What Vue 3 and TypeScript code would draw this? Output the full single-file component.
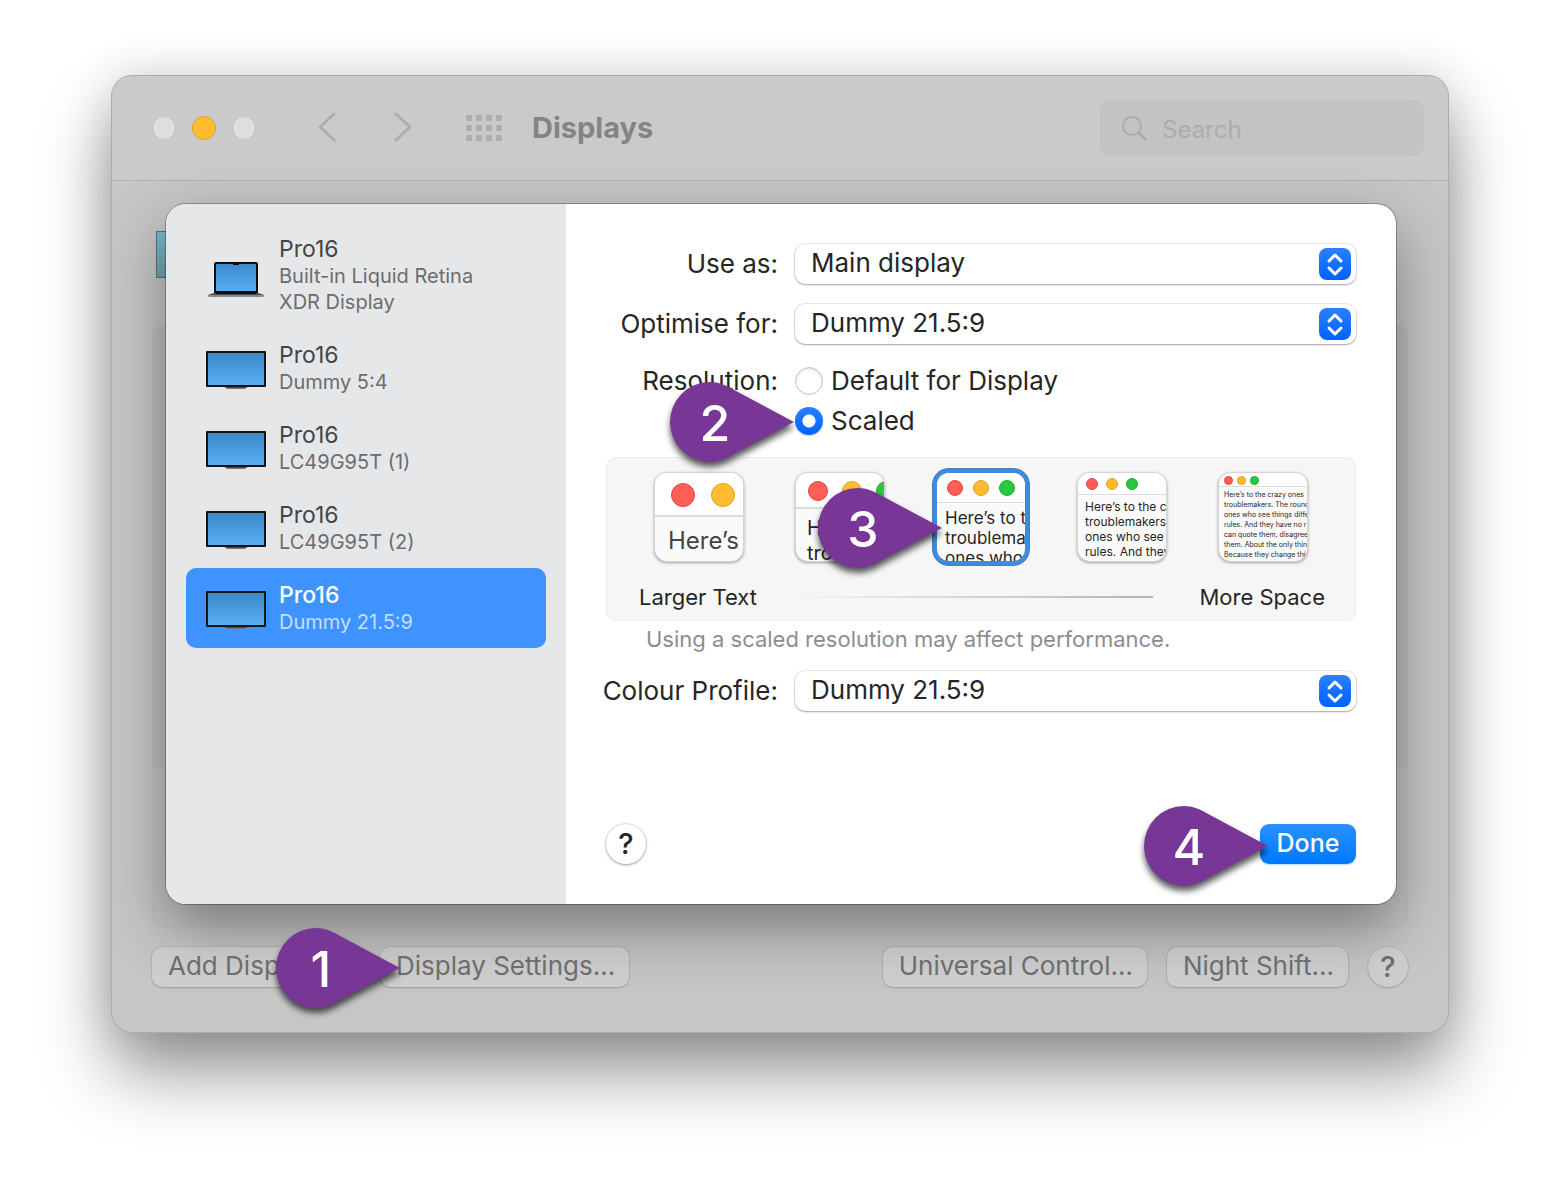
<script setup lang="ts">
import { ref } from 'vue'

interface Display {
  id: number
  name: string
  detail: string
  kind: 'laptop' | 'monitor'
}

interface Scale {
  id: string
  label: string
  lines: string[]
}

const displays: Display[] = [
  { id: 1, name: 'Pro16', detail: 'Built-in Liquid Retina XDR Display', kind: 'laptop' },
  { id: 2, name: 'Pro16', detail: 'Dummy 5:4', kind: 'monitor' },
  { id: 3, name: 'Pro16', detail: 'LC49G95T (1)', kind: 'monitor' },
  { id: 4, name: 'Pro16', detail: 'LC49G95T (2)', kind: 'monitor' },
  { id: 5, name: 'Pro16', detail: 'Dummy 21.5:9', kind: 'monitor' },
]

const scales: Scale[] = [
  { id: 'xl', label: 'Largest text', lines: ['Here’s'] },
  { id: 'lg', label: 'Larger text', lines: ['Here’s', 'troublem'] },
  { id: 'md', label: 'Medium', lines: ['Here’s to the', 'troublemakers', 'ones who see'] },
  { id: 'sm', label: 'More space', lines: ['Here’s to the crazy', 'troublemakers. The', 'ones who see things', 'rules. And they have'] },
  {
    id: 'xs',
    label: 'Most space',
    lines: [
      'Here’s to the crazy ones',
      'troublemakers. The round',
      'ones who see things differ',
      'rules. And they have no r',
      'can quote them, disagree',
      'them. About the only thing',
      'Because they change things',
    ],
  },
]

const selectedDisplay = ref(5)
const selectedScale = ref('md')
const resolution = ref('scaled')
const useAs = ref('Main display')
const optimiseFor = ref('Dummy 21.5:9')
const profile = ref('Dummy 21.5:9')

const calloutPath = 'M124 40 L66 9 C56 3 48 0 40 0 A40 40 0 0 0 40 80 C48 80 56 77 66 71 Z'
</script>

<template>
  <div class="page">
    <div class="window">
      <header class="toolbar">
        <div class="lights">
          <span class="light"></span>
          <span class="light amber"></span>
          <span class="light"></span>
        </div>
        <button class="tool back" aria-label="Back">
          <svg width="20" height="32" viewBox="0 0 20 32"><path d="M17 2 L3 15 L17 28" /></svg>
        </button>
        <button class="tool forward" aria-label="Forward">
          <svg width="20" height="32" viewBox="0 0 20 32"><path d="M3 2 L17 15 L3 28" /></svg>
        </button>
        <button class="tool all" aria-label="Show all">
          <svg width="36" height="26" viewBox="0 0 36 26">
            <template v-for="r in 3" :key="r">
              <rect v-for="c in 4" :key="c" :x="(c - 1) * 10" :y="(r - 1) * 10" width="6" height="6" rx="1" />
            </template>
          </svg>
        </button>
        <h1>Displays</h1>
        <label class="search">
          <svg width="26" height="26" viewBox="0 0 26 26"><circle cx="10" cy="11" r="9" /><path d="M17 18 L23 24" /></svg>
          <input type="search" placeholder="Search" aria-label="Search" />
        </label>
      </header>

      <div class="pane">
        <div class="arrangement"></div>
        <div class="group"><div class="group-inner"></div></div>
        <div class="actions">
          <button class="btn add">Add Display</button>
          <span class="anchor at-settings">
            <button class="btn">Display Settings…</button>
            <span class="callout"><svg viewBox="0 0 124 80"><path :d="calloutPath" /></svg><b>1</b></span>
          </span>
          <span class="spacer"></span>
          <button class="btn">Universal Control…</button>
          <button class="btn">Night Shift…</button>
          <button class="btn help" aria-label="Help">?</button>
        </div>
      </div>

      <section class="sheet" role="dialog" aria-label="Display settings">
        <ul class="sidebar">
          <li v-for="d in displays" :key="d.id">
            <button class="display" :class="{ selected: d.id === selectedDisplay }" @click="selectedDisplay = d.id">
              <svg v-if="d.kind === 'laptop'" width="60" height="46" viewBox="0 0 60 46">
                <defs>
                  <linearGradient id="lap" x1="0" y1="0" x2="0" y2="1">
                    <stop offset="0" stop-color="#3b8acb" /><stop offset="1" stop-color="#5aaeef" />
                  </linearGradient>
                </defs>
                <rect x="8" y="9" width="44" height="32" rx="2" fill="#0c0d0e" />
                <rect x="10" y="11" width="40" height="27" fill="url(#lap)" />
                <rect x="27" y="10" width="6" height="2" fill="#0c0d0e" />
                <path d="M8 40 L2 42 H58 L52 40 Z" fill="#4a4a4d" />
                <path d="M10 39 H50 V41 H10 Z" fill="#0c0d0e" />
                <path d="M2 42 H58 V43 Q58 44 56 44 H4 Q2 44 2 43 Z" fill="#8b8a8f" />
              </svg>
              <svg v-else width="60" height="40" viewBox="0 0 60 40">
                <defs>
                  <linearGradient id="mon" x1="0" y1="0" x2="0" y2="1">
                    <stop offset="0" stop-color="#3b8acb" /><stop offset="1" stop-color="#5aaeef" />
                  </linearGradient>
                </defs>
                <path d="M19 38 H41 Q40 40 36 40 H24 Q20 40 19 38 Z" fill="#77726f" />
                <path d="M19 38 H41" stroke="#2a2a2c" />
                <rect x="0" y="2" width="60" height="36" rx="1" fill="#121416" />
                <rect x="2" y="4" width="56" height="32" fill="url(#mon)" />
              </svg>
              <span class="names">
                <span class="name">{{ d.name }}</span>
                <span class="detail">{{ d.detail }}</span>
              </span>
            </button>
          </li>
        </ul>

        <form class="settings" @submit.prevent>
          <div class="row">
            <label for="use-as">Use as:</label>
            <span class="popup">
              <select id="use-as" v-model="useAs"><option>Main display</option></select>
              <svg viewBox="0 0 32 32"><path d="M10 13 L16 7 L22 13 M10 20 L16 26 L22 20" /></svg>
            </span>
          </div>
          <div class="row">
            <label for="optimise">Optimise for:</label>
            <span class="popup">
              <select id="optimise" v-model="optimiseFor"><option>Dummy 21.5:9</option></select>
              <svg viewBox="0 0 32 32"><path d="M10 13 L16 7 L22 13 M10 20 L16 26 L22 20" /></svg>
            </span>
          </div>
          <div class="row radios" role="radiogroup" aria-labelledby="res-label">
            <span id="res-label" class="row-label">Resolution:</span>
            <div class="choices">
              <label class="choice">
                <input v-model="resolution" type="radio" name="resolution" value="default" />
                Default for Display
              </label>
              <label class="choice anchor at-scaled">
                <input v-model="resolution" type="radio" name="resolution" value="scaled" />
                Scaled
                <span class="callout"><svg viewBox="0 0 124 80"><path :d="calloutPath" /></svg><b>2</b></span>
              </label>
            </div>
          </div>

          <div class="scale-box">
            <div class="thumbs">
              <span v-for="s in scales" :key="s.id" class="anchor at-thumb">
                <button
                  type="button"
                  class="thumb"
                  :class="[s.id, { chosen: s.id === selectedScale }]"
                  :aria-label="s.label"
                  @click="selectedScale = s.id"
                >
                  <span class="bar"><i class="red"></i><i class="yellow"></i><i v-if="s.id !== 'xl'" class="green"></i></span>
                  <span class="copy"><span v-for="line in s.lines" :key="line">{{ line }}</span></span>
                </button>
                <span v-if="s.id === 'md'" class="callout"><svg viewBox="0 0 124 80"><path :d="calloutPath" /></svg><b>3</b></span>
              </span>
            </div>
            <div class="legend">
              <span>Larger Text</span>
              <span class="ramp"></span>
              <span>More Space</span>
            </div>
          </div>
          <p class="note">Using a scaled resolution may affect performance.</p>

          <div class="row">
            <label for="profile">Colour Profile:</label>
            <span class="popup">
              <select id="profile" v-model="profile"><option>Dummy 21.5:9</option></select>
              <svg viewBox="0 0 32 32"><path d="M10 13 L16 7 L22 13 M10 20 L16 26 L22 20" /></svg>
            </span>
          </div>

          <div class="footer">
            <button type="button" class="btn help light-help" aria-label="Help">?</button>
            <span class="anchor at-done">
              <button type="submit" class="done">Done</button>
              <span class="callout"><svg viewBox="0 0 124 80"><path :d="calloutPath" /></svg><b>4</b></span>
            </span>
          </div>
        </form>
      </section>
    </div>
  </div>
</template>

<style>
body {
  background: #fff;
}
</style>

<style scoped>
.page,
.page * {
  box-sizing: border-box;
}

.page {
  padding: 76px 112px 148px;
  overflow: hidden;
  font-family: Inter, 'Liberation Sans', sans-serif;
  font-size: 26px;
  line-height: 30px;
  color: #262626;
}

button,
input,
select {
  font: inherit;
  color: inherit;
}

button {
  border: 0;
  padding: 0;
  background: none;
}

.window {
  position: relative;
  border-radius: 20px;
  background: #c6c6c6;
  box-shadow:
    0 0 0 1px #acacac,
    0 40px 70px rgba(0, 0, 0, 0.42),
    0 0 50px rgba(0, 0, 0, 0.14);
}

/* Toolbar */
.toolbar {
  display: flex;
  align-items: center;
  height: 105px;
  padding: 0 24px 0 40px;
  border-bottom: 1px solid #b3b3b3;
  border-radius: 20px 20px 0 0;
  background: #cacaca;
}

.lights {
  display: flex;
  gap: 16px;
}

.light {
  width: 24px;
  height: 24px;
  border: 1px solid #c2c2c2;
  border-radius: 50%;
  background: #dedede;
}

.light.amber {
  border-color: #e0a02a;
  background: #fdbc2e;
}

.tool {
  display: flex;
}

.tool path {
  fill: none;
  stroke: #adadad;
  stroke-width: 3;
  stroke-linecap: round;
  stroke-linejoin: round;
}

.tool rect {
  fill: #adadad;
}

.back {
  margin-left: 61px;
}

.forward {
  margin-left: 56px;
}

.all {
  margin-left: 53px;
}

h1 {
  margin: 0 auto 0 30px;
  font-size: 29px;
  line-height: 36px;
  font-weight: 700;
  color: #848484;
}

.search {
  display: flex;
  align-items: center;
  gap: 14px;
  width: 324px;
  height: 56px;
  padding: 0 16px 0 22px;
  border-radius: 11px;
  background: #c3c3c3;
  font-size: 24px;
}

.search svg {
  flex: none;
  fill: none;
  stroke: #acacac;
  stroke-width: 2;
  stroke-linecap: round;
}

.search svg path {
  stroke-width: 3;
}

.search input {
  min-width: 0;
  width: 100%;
  padding: 3px 0 0;
  border: 0;
  outline: 0;
  background: none;
}

.search input::placeholder {
  color: #acacac;
  opacity: 1;
}

/* Window content under the sheet */
.pane {
  padding: 50px 40px 45px;
}

.arrangement {
  width: 80px;
  height: 47px;
  margin: 0 0 47px 4px;
  border: 1px solid #5f6f74;
  background: linear-gradient(#78bccd, #6ea5b3);
}

.group {
  min-height: 602px;
  border: 1px solid #bebebe;
  border-radius: 10px;
  background: #c3c3c3;
}

.group-inner {
  height: 441px;
  border-radius: 10px 10px 0 0;
  background: #bebebe;
}

.actions {
  position: relative;
  z-index: 2;
  display: flex;
  gap: 20px;
  margin-top: 20px;
}

.spacer {
  flex: 1;
}

.btn {
  height: 40px;
  padding: 0 14px 2px 16px;
  border-radius: 10px;
  background: rgba(255, 255, 255, 0.16);
  box-shadow:
    0 0 0 1px rgba(0, 0, 0, 0.06),
    0 1px 2px rgba(0, 0, 0, 0.16);
  color: #6d6d6d;
  white-space: nowrap;
}

.btn.add {
  min-width: 208px;
  text-align: left;
}

.btn.help {
  width: 40px;
  padding: 0;
  border-radius: 50%;
  font-size: 29px;
  font-weight: 500;
}

/* Sheet */
.sheet {
  position: absolute;
  inset: 128px 52px 128px 54px;
  display: flex;
  border-radius: 20px;
  background: #fff;
  box-shadow:
    0 0 0 1px rgba(0, 0, 0, 0.28),
    0 24px 60px rgba(0, 0, 0, 0.38);
}

.sidebar {
  flex: none;
  width: 400px;
  margin: 0;
  padding: 18px 20px;
  border-radius: 20px 0 0 20px;
  background: #e6e7e9;
  list-style: none;
}

.display {
  display: flex;
  align-items: center;
  gap: 13px;
  width: 100%;
  padding: 14px 40px 13px 20px;
  border-radius: 10px;
  text-align: left;
}

.display svg {
  flex: none;
}

.names {
  display: flex;
  flex-direction: column;
  gap: 1px;
  line-height: 26px;
}

.name {
  font-size: 23px;
  color: #454545;
}

.detail {
  font-size: 20px;
  color: #6c6d6e;
}

.selected {
  background: #3e93fe;
}

.selected .name {
  font-weight: 500;
  color: #fff;
}

.selected .detail {
  color: #c4deff;
}

/* Settings form */
.settings {
  flex: 1;
  display: flex;
  flex-direction: column;
  min-width: 0;
  padding: 40px;
}

.row {
  display: flex;
  align-items: center;
  gap: 17px;
  margin-bottom: 20px;
}

.row > label,
.row-label {
  flex: none;
  display: flex;
  justify-content: flex-end;
  width: 172px;
  white-space: nowrap;
}

.popup {
  position: relative;
  flex: 1;
  height: 40px;
}

.popup select {
  appearance: none;
  display: block;
  width: 100%;
  height: 100%;
  padding: 0 48px 3px 16px;
  border: 0;
  border-radius: 10px;
  background: #fff;
  box-shadow:
    0 0 0 1px rgba(0, 0, 0, 0.08),
    0 1px 2px rgba(0, 0, 0, 0.3);
}

.popup svg {
  position: absolute;
  top: 4px;
  right: 5px;
  width: 32px;
  height: 32px;
  border-radius: 8px;
  background: linear-gradient(#2a80ff, #0062ff);
  fill: none;
  stroke: #fff;
  stroke-width: 3;
  stroke-linecap: round;
  stroke-linejoin: round;
  pointer-events: none;
}

.radios {
  align-items: flex-start;
  margin: 2px 0 21px;
}

.choices {
  display: flex;
  flex-direction: column;
  align-items: flex-start;
  gap: 10px;
}

.choice {
  display: flex;
  align-items: center;
  gap: 8px;
}

.choice input {
  appearance: none;
  width: 28px;
  height: 28px;
  margin: 0;
  border: 1px solid #c4c4c4;
  border-radius: 50%;
  background: #fff;
  box-shadow: inset 0 1px 3px rgba(0, 0, 0, 0.15);
}

.choice input:checked {
  border: 0;
  background: radial-gradient(circle, #fff 6px, transparent 7px), linear-gradient(#2a80ff, #0062ff);
  box-shadow: 0 1px 2px rgba(0, 98, 255, 0.3);
}

.scale-box {
  padding: 14px 0 8px;
  border: 1px solid #ebebeb;
  border-radius: 10px;
  background: #f6f6f6;
}

.thumbs {
  display: flex;
  justify-content: space-between;
  padding: 0 47px;
}

.thumb {
  display: flex;
  flex-direction: column;
  align-items: stretch;
  justify-content: flex-start;
  width: 90px;
  height: 90px;
  border: 1px solid #d4d4d4;
  border-radius: 13px;
  overflow: hidden;
  background: #fafafa;
  box-shadow: 0 1px 3px rgba(0, 0, 0, 0.35);
  text-align: left;
}

.thumb.chosen {
  border-color: #3f8ade;
  box-shadow:
    0 0 0 3px #3f8ade,
    0 0 0 4px #4a7fbd;
}

.bar {
  flex: none;
  display: flex;
  align-items: center;
  height: var(--bar);
  padding: 1px 0 0 var(--bar-pad);
  gap: var(--gap);
  border-bottom: 1px solid #dcdcdc;
  background: #fff;
}

.bar i {
  flex: none;
  width: var(--dot);
  height: var(--dot);
  border-width: 1px;
  border-style: solid;
  border-radius: 50%;
}

.red {
  border-color: #e2463f;
  background: #ff5f57;
}

.yellow {
  border-color: #e0a01f;
  background: #febc2e;
}

.green {
  border-color: #1dad2b;
  background: #28c840;
}

.copy {
  display: flex;
  flex-direction: column;
  padding: var(--copy-top) 0 0 var(--copy-left);
  white-space: nowrap;
}

.xl {
  --bar: 44px;
  --bar-pad: 16px;
  --gap: 16px;
  --dot: 24px;
  --copy-top: 9px;
  --copy-left: 13px;
  font-size: 24px;
  line-height: 30px;
  color: #444;
}

.xl .bar,
.lg .bar {
  border-bottom-width: 2px;
}

.lg {
  --bar: 36px;
  --bar-pad: 12px;
  --gap: 14px;
  --dot: 20px;
  --copy-top: 7px;
  --copy-left: 11px;
  font-size: 20px;
  line-height: 25px;
}

.md {
  --bar: 30px;
  --bar-pad: 10px;
  --gap: 10px;
  --dot: 16px;
  --copy-top: 5px;
  --copy-left: 8px;
  font-size: 17px;
  line-height: 20px;
}

.sm {
  --bar: 22px;
  --bar-pad: 8px;
  --gap: 8px;
  --dot: 12px;
  --copy-top: 4px;
  --copy-left: 7px;
  font-size: 12px;
  line-height: 15px;
}

.xs {
  --bar: 14px;
  --bar-pad: 5px;
  --gap: 4px;
  --dot: 9px;
  --copy-top: 3px;
  --copy-left: 5px;
  font-size: 7px;
  line-height: 10px;
}

.legend {
  display: flex;
  align-items: center;
  margin-top: 20px;
  padding: 0 30px 0 32px;
  font-size: 22px;
}

.ramp {
  flex: 1;
  height: 2px;
  margin: 0 46px 0 33px;
  background: linear-gradient(to right, #f6f6f6, #b4b4b4);
}

.note {
  margin: 3px 0 17px 40px;
  font-size: 22px;
  color: #8d8d91;
}

.footer {
  display: flex;
  align-items: center;
  justify-content: space-between;
  margin-top: auto;
}

.light-help {
  background: #fff;
  color: #262626;
  box-shadow:
    0 0 0 1px rgba(0, 0, 0, 0.08),
    0 1px 3px rgba(0, 0, 0, 0.35);
}

.done {
  display: block;
  width: 96px;
  height: 40px;
  padding-bottom: 2px;
  border-radius: 9px;
  background: linear-gradient(#2a90ff, #007aff);
  box-shadow: 0 1px 2px rgba(0, 122, 255, 0.3);
  color: #fff;
  font-size: 25px;
  font-weight: 500;
}

/* Numbered step markers, pinned by their tip to the control they describe */
.anchor {
  position: relative;
}

.callout {
  position: absolute;
  z-index: 3;
  width: 124px;
  height: 80px;
  filter: drop-shadow(0 5px 3px rgba(0, 0, 0, 0.65));
  pointer-events: none;
}

.callout svg {
  display: block;
  width: 124px;
  height: 80px;
  fill: #783697;
}

.callout b {
  position: absolute;
  inset: 0 34px 0 0;
  font-size: 50px;
  line-height: 82px;
  font-weight: 500;
  text-align: center;
  color: #fff;
}

.at-settings .callout {
  top: -19px;
  left: -104px;
}

.at-scaled .callout {
  top: -24px;
  left: -125px;
}

.at-thumb .callout {
  top: 16px;
  left: -118px;
}

.at-done .callout {
  top: -18px;
  left: -116px;
}
</style>
